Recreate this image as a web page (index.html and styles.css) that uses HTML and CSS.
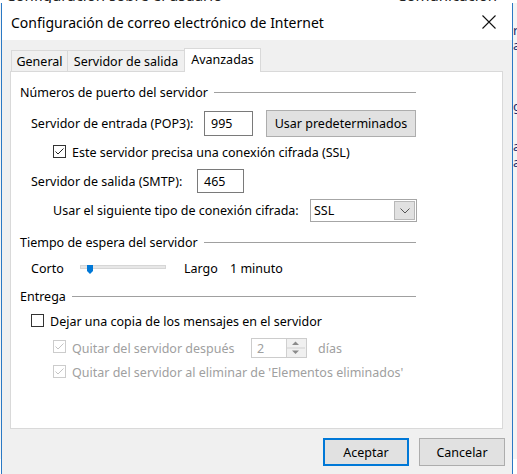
FILE: index.html
```html
<!DOCTYPE html>
<html lang="es">
<head>
<meta charset="utf-8">
<title>Configuración de correo electrónico de Internet</title>
<link rel="stylesheet" href="styles.css">
</head>
<body>
<div class="desktop">
  <div class="bgwin">
    <div class="bg-top"><span>Configuración sobre el usuario</span><span>Comunicación</span></div>
    <div class="bg-right">
      <span class="f1">r</span>
      <span class="f2">a</span>
      <span class="f3">g</span>
      <span class="f4">a</span>
      <span class="f5">a</span>
    </div>
  </div>

  <div class="dialog">
    <div class="titlebar">
      <span class="title">Configuración de correo electrónico de Internet</span>
      <svg class="close" width="14" height="14" viewBox="0 0 14 14"><path d="M0.5 0.5 L13.5 13.5 M13.5 0.5 L0.5 13.5" stroke="#111" stroke-width="1.1" fill="none"/></svg>
    </div>

    <div class="body">
      <div class="tabs">
        <div class="tab t-general">General</div>
        <div class="tab t-salida">Servidor de salida</div>
        <div class="tab tab-active t-avanz">Avanzadas</div>
      </div>
      <div class="panel">
        <div class="heading"><span>Números de puerto del servidor</span><span class="rule"></span></div>

        <div class="row r-pop">
          <span class="lbl lbl-pop">Servidor de entrada (POP3):</span>
          <span class="input in-pop">995</span>
          <span class="btn btn-def">Usar predeterminados</span>
        </div>

        <div class="row r-ssl sub">
          <span class="cb"><svg width="11" height="11" viewBox="0 0 11 11"><path d="M1.5 5.5 L4 8 L9.5 2.5" stroke="#222" stroke-width="1" fill="none"/></svg></span>
          <span>Este servidor precisa una conexión cifrada (SSL)</span>
        </div>

        <div class="row r-smtp">
          <span class="lbl lbl-smtp">Servidor de salida (SMTP):</span>
          <span class="input in-smtp">465</span>
        </div>

        <div class="row r-enc sub">
          <span class="lbl lbl-enc">Usar el siguiente tipo de conexión cifrada:</span>
          <span class="select">
            <span class="sel-val">SSL</span>
            <span class="sel-btn"><svg width="10" height="6" viewBox="0 0 10 6"><path d="M0.5 0.5 L5 5 L9.5 0.5" stroke="#555" stroke-width="1" fill="none"/></svg></span>
          </span>
        </div>

        <div class="heading h-time"><span>Tiempo de espera del servidor</span><span class="rule"></span></div>

        <div class="row r-slider">
          <span class="lbl lbl-corto">Corto</span>
          <span class="track"><svg class="thumb" width="6" height="9" viewBox="0 0 6 9"><polygon points="0,0 6,0 6,6 3,9 0,6" fill="#0078d7"/></svg></span>
          <span class="lbl lbl-largo">Largo</span>
          <span>1 minuto</span>
        </div>

        <div class="heading h-entrega"><span>Entrega</span><span class="rule"></span></div>

        <div class="row r-copy">
          <span class="cb"></span>
          <span>Dejar una copia de los mensajes en el servidor</span>
        </div>

        <div class="row r-after sub disabled">
          <span class="cb cb-dis"><svg width="11" height="11" viewBox="0 0 11 11"><path d="M1.5 5.5 L4 8 L9.5 2.5" stroke="#c4c4c4" stroke-width="1" fill="none"/></svg></span>
          <span class="lbl lbl-after">Quitar del servidor después</span>
          <span class="spin">
            <span class="spin-val">2</span>
            <span class="spin-btns">
              <svg width="19" height="18" viewBox="0 0 19 18"><path d="M0.5 0 V18" stroke="#d0d0d0"/><path d="M0.5 9 H19" stroke="#d0d0d0"/><polygon points="6,6 13,6 9.5,2.5" fill="#8a8a8a"/><polygon points="6,11.5 13,11.5 9.5,15" fill="#8a8a8a"/></svg>
            </span>
          </span>
          <span class="dias">días</span>
        </div>

        <div class="row r-elim sub disabled">
          <span class="cb cb-dis"><svg width="11" height="11" viewBox="0 0 11 11"><path d="M1.5 5.5 L4 8 L9.5 2.5" stroke="#c4c4c4" stroke-width="1" fill="none"/></svg></span>
          <span>Quitar del servidor al eliminar de 'Elementos eliminados'</span>
        </div>
      </div>
    </div>

    <div class="footer">
      <span class="btn btn-ok">Aceptar</span>
      <span class="btn btn-cancel">Cancelar</span>
    </div>
  </div>
</div>
</body>
</html>
```

FILE: styles.css
```css
* { box-sizing: border-box; }

body {
  margin: 0;
  width: 517px;
  height: 474px;
  overflow: hidden;
  font-family: "Noto Sans", "Segoe UI", sans-serif;
  font-size: 12.5px;
  color: #000;
}

.desktop {
  position: relative;
  width: 517px;
  height: 474px;
  background: #fff;
  overflow: hidden;
}

.bgwin {
  width: 517px;
  height: 474px;
  background: #f4f4f4;
}

.bg-top {
  display: flex;
  justify-content: space-between;
  margin-top: -15px;
  padding: 0 20px 0 6px;
  font-size: 15px;
  color: #222;
  background: #fff;
  height: 18px;
}

.bg-right {
  position: relative;
  height: 456px;
  color: #1c2a6a;
  font-size: 13px;
  line-height: 14px;
}

.bg-right span { position: absolute; left: 513px; }
.bg-right .f1 { top: 20px; }
.bg-right .f2 { top: 35px; }
.bg-right .f3 { top: 96px; }
.bg-right .f4 { top: 136px; }
.bg-right .f5 { top: 152px; }

.dialog {
  position: absolute;
  left: 1px;
  top: 3px;
  width: 512px;
  height: 472px;
  border-left: 1px solid #2b79c4;
  border-right: 1px solid #2b79c4;
  background: #f0f0f0;
  display: flex;
  flex-direction: column;
}

.titlebar {
  height: 37px;
  flex: none;
  background: #fff;
  display: flex;
  align-items: center;
  justify-content: space-between;
  padding: 0 16px 0 9px;
}

.title {
  font-size: 14px;
  color: #000;
  padding-top: 1px;
}

.body {
  padding: 8px 9px 0 8px;
}

.tabs {
  display: flex;
  align-items: flex-end;
  height: 23px;
  padding-left: 1px;
  position: relative;
  z-index: 1;
}

.tab {
  height: 21px;
  border: 1px solid #d9d9d9;
  border-bottom: none;
  background: #f0f0f0;
  display: flex;
  align-items: center;
  justify-content: center;
  margin-right: -1px;
  color: #000;
}

.t-general { width: 57px; }
.t-salida { width: 118px; }
.t-avanz {
  width: 77px;
  height: 24px;
  background: #fff;
  margin-bottom: -1px;
  padding-bottom: 2px;
}

.panel {
  height: 358px;
  border: 1px solid #d9d9d9;
  background: #fff;
  padding: 10px 0 0 9px;
}

.heading {
  width: 396px;
  height: 20px;
  display: flex;
  align-items: center;
}

.heading .rule {
  flex: 1;
  height: 1px;
  background: #a0a0a0;
  margin-left: 6px;
  margin-top: 1px;
}

.row {
  display: flex;
  align-items: center;
  padding-left: 11px;
}

.row.sub { padding-left: 33px; }

.lbl { flex: none; }

.r-pop { height: 27px; margin-top: 8px; }
.lbl-pop { width: 173px; }
.input {
  height: 25px;
  border: 1px solid #7a7a7a;
  background: #fff;
  display: flex;
  align-items: center;
  padding-left: 6px;
}
.in-pop { width: 49px; }

.btn {
  display: flex;
  align-items: center;
  justify-content: center;
  background: #e1e1e1;
  border: 1px solid #adadad;
  color: #000;
}

.btn-def {
  width: 150px;
  height: 27px;
  margin-left: 13px;
}

.r-ssl { height: 17px; margin-top: 7px; }

.cb {
  width: 13px;
  height: 13px;
  border: 1px solid #333;
  background: #fff;
  margin-right: 6px;
  flex: none;
  display: flex;
  align-items: center;
  justify-content: center;
  margin-top: -3px;
}

.cb-dis { border-color: #cccccc; }

.r-smtp { height: 24px; margin-top: 8px; }
.lbl-smtp { width: 166px; }
.in-smtp { width: 47px; height: 24px; }

.r-enc { height: 23px; margin-top: 6px; }
.lbl-enc { width: 257px; }

.select {
  width: 107px;
  height: 23px;
  border: 1px solid #a6a6a6;
  display: flex;
  align-items: stretch;
  background: #fff;
}

.sel-val {
  flex: 1;
  display: flex;
  align-items: center;
  padding-left: 3px;
}

.sel-btn {
  width: 21px;
  margin: 1px;
  background: #e1e1e1;
  border: 1px solid #b8b8b8;
  display: flex;
  align-items: center;
  justify-content: center;
}

.h-time { margin-top: 10px; }

.r-slider { height: 20px; margin-top: 6px; }
.lbl-corto { width: 49px; }

.track {
  position: relative;
  width: 86px;
  height: 4px;
  background: #e7e7e7;
  border: 1px solid #d6d6d6;
  margin-top: -3px;
}

.thumb {
  position: absolute;
  left: 6px;
  top: -1px;
}

.lbl-largo { width: 46px; margin-left: 18px; }

.h-entrega { margin-top: 8px; }

.r-copy { height: 17px; margin-top: 7px; }

.disabled { color: #a0a0a0; }

.r-after { height: 20px; margin-top: 8px; }
.lbl-after { width: 179px; }

.spin {
  width: 56px;
  height: 20px;
  border: 1px solid #cccccc;
  background: #fff;
  display: flex;
  align-items: stretch;
}

.spin-val {
  flex: 1;
  display: flex;
  align-items: center;
  padding-left: 5px;
}

.spin-btns {
  width: 20px;
  background: #f0f0f0;
  display: flex;
}

.dias { margin-left: 11px; }

.r-elim { height: 17px; margin-top: 6px; }

.footer {
  display: flex;
  justify-content: flex-end;
  gap: 10px;
  padding-right: 7px;
  margin-top: 9px;
}

.btn-ok {
  width: 86px;
  height: 28px;
  border: 2px solid #0078d7;
}

.btn-cancel {
  width: 86px;
  height: 28px;
}
```
